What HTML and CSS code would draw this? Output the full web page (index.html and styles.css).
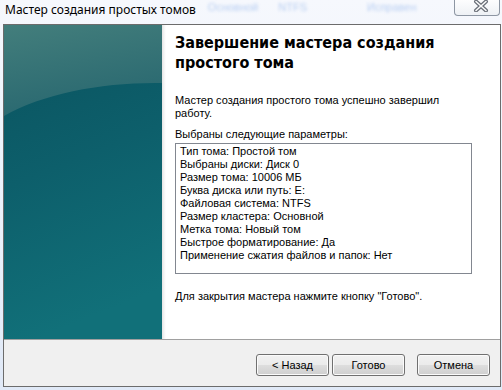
FILE: index.html
```html
<!DOCTYPE html>
<html lang="ru">
<head>
  <meta charset="UTF-8">
  <title>Мастер создания простых томов</title>
  <link rel="stylesheet" href="styles.css">
</head>
<body>

<div class="titlebar">
  <span class="caption">Мастер создания простых томов</span>
  <div class="ghosts">
    <span>Основной</span>
    <span>NTFS</span>
    <span class="wide">Исправен</span>
  </div>
  <div class="close-btn">
    <svg width="18" height="12" viewBox="0 0 18 12">
      <path d="M4 1.5 L14 10.5 M14 1.5 L4 10.5" stroke="#6a6f78" stroke-width="4" stroke-linecap="round"/>
      <path d="M4 1.5 L14 10.5 M14 1.5 L4 10.5" stroke="#fafafa" stroke-width="1.6" stroke-linecap="round"/>
    </svg>
  </div>
</div>

<div class="window">
  <div class="main">
    <svg class="banner" width="158" height="314" viewBox="0 0 158 314">
      <defs>
        <linearGradient id="dark" x1="0" y1="0" x2="0.2" y2="1">
          <stop offset="0" stop-color="#0a525e"/>
          <stop offset="0.5" stop-color="#0d5f6b"/>
          <stop offset="1" stop-color="#117079"/>
        </linearGradient>
        <linearGradient id="light" x1="0" y1="0" x2="0.3" y2="1">
          <stop offset="0" stop-color="#437e7c"/>
          <stop offset="1" stop-color="#296870"/>
        </linearGradient>
      </defs>
      <rect width="158" height="314" fill="url(#dark)"/>
      <path d="M0 0 H158 V58 C100 57 40 68 0 91 Z" fill="url(#light)"/>
    </svg>

    <div class="content">
      <h1 class="heading">Завершение мастера создания простого тома</h1>
      <p class="text">Мастер создания простого тома успешно завершил работу.</p>
      <p class="text label">Выбраны следующие параметры:</p>
      <div class="summary">
        <div>Тип тома: Простой том</div>
        <div>Выбраны диски: Диск 0</div>
        <div>Размер тома: 10006 МБ</div>
        <div>Буква диска или путь: E:</div>
        <div>Файловая система: NTFS</div>
        <div>Размер кластера: Основной</div>
        <div>Метка тома: Новый том</div>
        <div>Быстрое форматирование: Да</div>
        <div>Применение сжатия файлов и папок: Нет</div>
      </div>
      <p class="text closing">Для закрытия мастера нажмите кнопку "Готово".</p>
    </div>
  </div>

  <div class="footer">
    <button class="btn">&lt; Назад</button>
    <button class="btn">Готово</button>
    <button class="btn cancel">Отмена</button>
  </div>
</div>

</body>
</html>
```

FILE: styles.css
```css
body {
  margin: 0;
  width: 502px;
  height: 390px;
  overflow: hidden;
  background: linear-gradient(180deg, #f6f8fd 0%, #e9f0fa 60%, #e0e9f7 100%);
  font-family: "Liberation Sans", Arial, sans-serif;
}

/* Заголовок окна */
.titlebar {
  height: 24px;
  display: flex;
  align-items: flex-start;
}

.caption {
  font-family: "Noto Sans", "Open Sans", sans-serif;
  font-size: 12px;
  line-height: 16px;
  margin: 2px 0 0 5px;
  color: #000;
  white-space: nowrap;
}

.ghosts {
  display: flex;
  gap: 20px;
  margin-left: 12px;
  padding-top: 1px;
  color: #b9cff2;
  font-size: 11px;
  filter: blur(1.4px);
  flex: 1;
  white-space: nowrap;
}

.ghosts .wide {
  margin-left: 40px;
}

.close-btn {
  flex-shrink: 0;
  width: 44px;
  height: 15px;
  margin: 0 2px 0 0;
  border: 1px solid #8d96a3;
  border-top: none;
  border-radius: 0 0 4px 4px;
  background: linear-gradient(180deg, #fdfdfe 0%, #eef1f5 100%);
  display: flex;
  align-items: center;
  justify-content: center;
}

.close-btn svg {
  display: block;
  margin: -3px 0 0 8px;
}

/* Окно мастера */
.window {
  margin-left: 3px;
  width: 496px;
  height: 361px;
  border: 1px solid #6c6c6c;
  background: #fff;
  display: flex;
  flex-direction: column;
}

.main {
  height: 314px;
  display: flex;
}

.banner {
  display: block;
  flex-shrink: 0;
}

.content {
  flex: 1;
  padding: 8px 0 0 13px;
  background: linear-gradient(90deg, #e3e3e3 0px, #f4f4f4 2px, #fff 4px);
}

.heading {
  margin: 0;
  font-family: "DejaVu Sans Condensed", "DejaVu Sans", sans-serif;
  font-stretch: condensed;
  font-size: 16px;
  line-height: 20px;
  font-weight: bold;
  color: #000;
  width: 300px;
}

.text {
  margin: 21px 0 0;
  font-size: 11px;
  line-height: 13px;
  color: #000;
  width: 290px;
}

.label {
  margin-top: 8px;
}

.summary {
  margin-top: 2px;
  width: 291px;
  height: 128px;
  border: 1px solid #828790;
  padding: 1px 0 0 4px;
  font-size: 11px;
  line-height: 13px;
}

.closing {
  margin-top: 16px;
  width: auto;
}

/* Кнопки */
.footer {
  flex: 1;
  border-top: 1px solid #a0a0a0;
  background: #f0f0f0;
  display: flex;
  justify-content: flex-end;
  align-items: flex-start;
  padding: 14px 10px 0 0;
}

.btn {
  width: 73px;
  height: 22px;
  margin-left: 3px;
  padding: 0;
  border: 1px solid #707070;
  border-radius: 3px;
  background: linear-gradient(180deg, #f2f2f2 0%, #ebebeb 48%, #dddddd 52%, #cfcfcf 100%);
  box-shadow: inset 0 0 0 1px #fbfbfb;
  font-family: "Liberation Sans", Arial, sans-serif;
  font-size: 11px;
  color: #000;
}

.cancel {
  margin-left: 12px;
}
```
